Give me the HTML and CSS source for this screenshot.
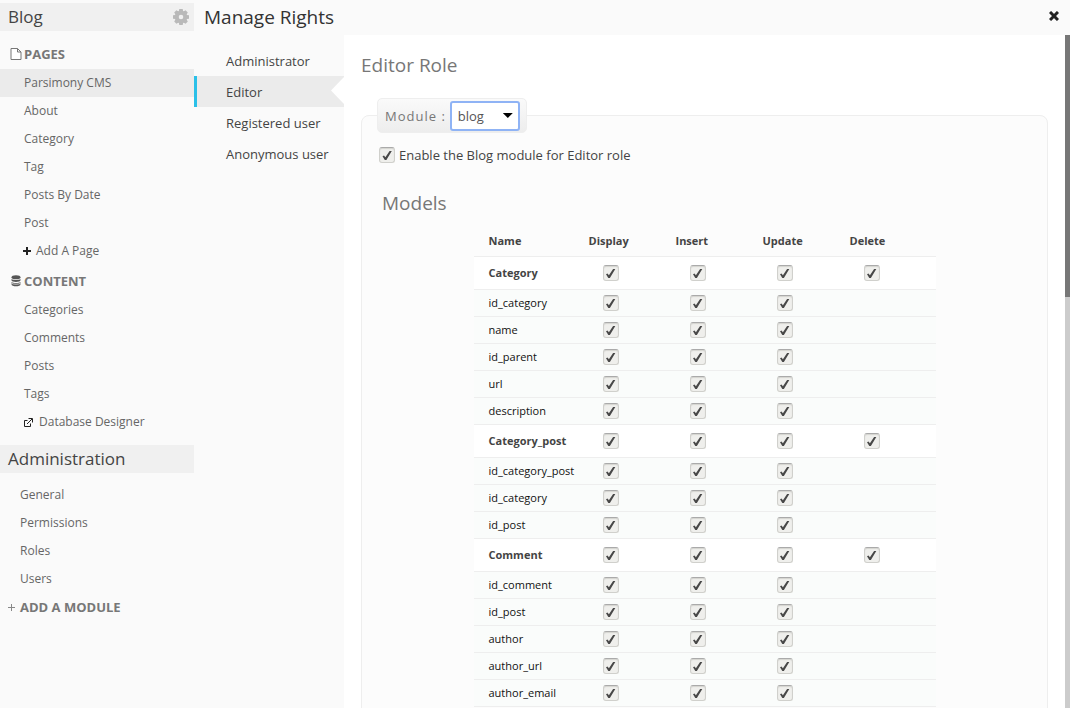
FILE: index.html
```html
<!DOCTYPE html>
<html lang="en">
<head>
<meta charset="utf-8">
<title>Manage Rights</title>
<link rel="stylesheet" href="styles.css">
</head>
<body>
<div class="app">
  <aside class="sidebar">
    <div class="side-title"><h2>Blog</h2>
      <button class="icon-button" type="button" aria-label="Settings"><svg width="16" height="16" viewBox="0 0 16 16"><path fill="#b9b9b9" fill-rule="evenodd" d="M6.300 0h3.400l.4 2 .7.300L12.600 1.200 14.800 3.400 13.700 5.200l.3.700 2 .4v3.400l-2 .4-.3.700 1.100 1.800-2.200 2.200-1.800-1.100-.7.300-.4 2H6.300l-.4-2-.7-.300-1.800 1.100-2.200-2.200 1.100-1.800-.3-.7-2-.4V6.300l2-.4.3-.7L1.200 3.400 3.400 1.200l1.800 1.100.7-.300zM8 5.700a2.300 2.300 0 1 0 0 4.600 2.300 2.300 0 0 0 0-4.600z"/></svg></button>
    </div>
    <nav>
      <h3 class="group"><svg width="12" height="12" viewBox="0 0 12 12"><path fill="#fff" stroke="#777" d="M1 .5h6.500l3.500 3.500v7.500H1zM7.500.5V4H11"/></svg>PAGES</h3>
      <ul class="links">
        <li class="current"><a href="#">Parsimony CMS</a></li>
        <li><a href="#">About</a></li>
        <li><a href="#">Category</a></li>
        <li><a href="#">Tag</a></li>
        <li><a href="#">Posts By Date</a></li>
        <li><a href="#">Post</a></li>
        <li><a class="with-icon" href="#"><svg width="8" height="8" viewBox="0 0 8 8"><path fill="#222" d="M3 0h2v3h3v2H5v3H3V5H0V3h3z"/></svg>Add A Page</a></li>
      </ul>
      <h3 class="group"><svg width="12" height="12" viewBox="0 0 12 12"><g fill="#555"><ellipse cx="6" cy="2.300" rx="4.500" ry="2"/><path d="M1.500 4c1.500 1.300 7.500 1.300 9 0v1.300C10.500 7.600 1.500 7.600 1.500 5.300zM1.500 6.900c1.500 1.300 7.500 1.300 9 0v2.300c0 2.700-9 2.700-9 0z"/></g><path stroke="#fafafa" fill="none" stroke-width=".7" d="M1.500 8.300c2 1.200 7 1.200 9 0"/></svg>CONTENT</h3>
      <ul class="links">
        <li><a href="#">Categories</a></li>
        <li><a href="#">Comments</a></li>
        <li><a href="#">Posts</a></li>
        <li><a href="#">Tags</a></li>
        <li><a class="with-icon wide" href="#"><svg width="9" height="9" viewBox="0 0 9 9"><path fill="none" stroke="#222" d="M3.500 2.500h-3v6h6v-3M3 6l5-5M4.500.5h4v4"/></svg>Database Designer</a></li>
      </ul>
    </nav>
    <div class="side-title admin-title"><h2>Administration</h2></div>
    <nav>
      <ul class="links admin">
        <li><a href="#">General</a></li>
        <li><a href="#">Permissions</a></li>
        <li><a href="#">Roles</a></li>
        <li><a href="#">Users</a></li>
      </ul>
      <a class="group add-module" href="#"><svg width="7" height="7" viewBox="0 0 7 7"><path stroke="#888" d="M3.500 0v7M0 3.500h7"/></svg>ADD A MODULE</a>
    </nav>
  </aside>
  <div class="window">
    <header class="window-head"><h1>Manage Rights</h1>
      <button class="icon-button" type="button" aria-label="Close"><svg width="10" height="10" viewBox="0 0 10 10"><path stroke="#222" stroke-width="3" d="M1 1l8 8M9 1L1 9"/></svg></button>
    </header>
    <div class="window-body">
      <ul class="roles">
        <li><a href="#">Administrator</a></li>
        <li class="active"><a href="#">Editor</a></li>
        <li><a href="#">Registered user</a></li>
        <li><a href="#">Anonymous user</a></li>
      </ul>
      <main class="panel">
        <h2>Editor Role</h2>
        <fieldset>
          <legend><label for="module">Module :</label><span class="select"><select id="module"><option>blog</option></select></span></legend>
          <label class="enable"><input type="checkbox" checked>Enable the Blog module for Editor role</label>
          <h2>Models</h2>
          <table>
            <colgroup><col class="c-name"><col class="c-right"><col class="c-right"><col class="c-right"><col></colgroup>
            <thead><tr><th scope="col">Name</th><th scope="col">Display</th><th scope="col">Insert</th><th scope="col">Update</th><th scope="col">Delete</th></tr></thead>
            <tbody>
              <tr class="model"><th scope="row">Category</th><td><input type="checkbox" aria-label="Display" checked></td><td><input type="checkbox" aria-label="Insert" checked></td><td><input type="checkbox" aria-label="Update" checked></td><td><input type="checkbox" aria-label="Delete" checked></td></tr>
              <tr><th scope="row">id_category</th><td><input type="checkbox" aria-label="Display" checked></td><td><input type="checkbox" aria-label="Insert" checked></td><td><input type="checkbox" aria-label="Update" checked></td><td></td></tr>
              <tr><th scope="row">name</th><td><input type="checkbox" aria-label="Display" checked></td><td><input type="checkbox" aria-label="Insert" checked></td><td><input type="checkbox" aria-label="Update" checked></td><td></td></tr>
              <tr><th scope="row">id_parent</th><td><input type="checkbox" aria-label="Display" checked></td><td><input type="checkbox" aria-label="Insert" checked></td><td><input type="checkbox" aria-label="Update" checked></td><td></td></tr>
              <tr><th scope="row">url</th><td><input type="checkbox" aria-label="Display" checked></td><td><input type="checkbox" aria-label="Insert" checked></td><td><input type="checkbox" aria-label="Update" checked></td><td></td></tr>
              <tr><th scope="row">description</th><td><input type="checkbox" aria-label="Display" checked></td><td><input type="checkbox" aria-label="Insert" checked></td><td><input type="checkbox" aria-label="Update" checked></td><td></td></tr>
            </tbody>
            <tbody>
              <tr class="model"><th scope="row">Category_post</th><td><input type="checkbox" aria-label="Display" checked></td><td><input type="checkbox" aria-label="Insert" checked></td><td><input type="checkbox" aria-label="Update" checked></td><td><input type="checkbox" aria-label="Delete" checked></td></tr>
              <tr><th scope="row">id_category_post</th><td><input type="checkbox" aria-label="Display" checked></td><td><input type="checkbox" aria-label="Insert" checked></td><td><input type="checkbox" aria-label="Update" checked></td><td></td></tr>
              <tr><th scope="row">id_category</th><td><input type="checkbox" aria-label="Display" checked></td><td><input type="checkbox" aria-label="Insert" checked></td><td><input type="checkbox" aria-label="Update" checked></td><td></td></tr>
              <tr><th scope="row">id_post</th><td><input type="checkbox" aria-label="Display" checked></td><td><input type="checkbox" aria-label="Insert" checked></td><td><input type="checkbox" aria-label="Update" checked></td><td></td></tr>
            </tbody>
            <tbody>
              <tr class="model"><th scope="row">Comment</th><td><input type="checkbox" aria-label="Display" checked></td><td><input type="checkbox" aria-label="Insert" checked></td><td><input type="checkbox" aria-label="Update" checked></td><td><input type="checkbox" aria-label="Delete" checked></td></tr>
              <tr><th scope="row">id_comment</th><td><input type="checkbox" aria-label="Display" checked></td><td><input type="checkbox" aria-label="Insert" checked></td><td><input type="checkbox" aria-label="Update" checked></td><td></td></tr>
              <tr><th scope="row">id_post</th><td><input type="checkbox" aria-label="Display" checked></td><td><input type="checkbox" aria-label="Insert" checked></td><td><input type="checkbox" aria-label="Update" checked></td><td></td></tr>
              <tr><th scope="row">author</th><td><input type="checkbox" aria-label="Display" checked></td><td><input type="checkbox" aria-label="Insert" checked></td><td><input type="checkbox" aria-label="Update" checked></td><td></td></tr>
              <tr><th scope="row">author_url</th><td><input type="checkbox" aria-label="Display" checked></td><td><input type="checkbox" aria-label="Insert" checked></td><td><input type="checkbox" aria-label="Update" checked></td><td></td></tr>
              <tr><th scope="row">author_email</th><td><input type="checkbox" aria-label="Display" checked></td><td><input type="checkbox" aria-label="Insert" checked></td><td><input type="checkbox" aria-label="Update" checked></td><td></td></tr>
            </tbody>
          </table>
        </fieldset>
      </main>
      <div class="scroll-track"><div class="scroll-thumb"></div></div>
    </div>
  </div>
</div>
</body>
</html>
```

FILE: styles.css
```css
* { box-sizing: border-box; }
body { margin: 0; background: #fafafa; color: #444; font: 12px/28px "Open Sans", "Noto Sans", sans-serif; }
h1, h2, h3, ul { margin: 0; padding: 0; }
h1, h2 { font-size: 19px; font-weight: 400; }
ul { list-style: none; }
a { color: inherit; text-decoration: none; }
svg { display: block; flex: none; }

.app { display: flex; height: 100vh; overflow: hidden; }
.icon-button { padding: 0; border: 0; background: none; cursor: pointer; }

/* Left navigation */
.sidebar { flex: none; width: 194px; padding-top: 3px; color: #666; }
.side-title { display: flex; align-items: center; justify-content: space-between; height: 28px; padding: 0 5px 0 8px; background: #f0f0f0; color: #444; }
.side-title h2 { font-size: 17px; }
.admin-title { margin: 9px 0 8px; }
.group { display: flex; align-items: center; gap: 2px; height: 31px; padding-left: 10px; color: #777; font-size: 13px; font-weight: 700; }
.side-title + nav > h3:first-child { height: 38px; padding-top: 8px; }
.links li { height: 28px; padding-left: 24px; }
.links.admin li { padding-left: 20px; }
.links .current { background: #ebebeb; }
.with-icon { display: inline-flex; align-items: center; gap: 5px; height: 28px; margin-left: -1px; }
.with-icon.wide { gap: 6px; margin-left: 0; }
.add-module { gap: 5px; height: 28px; padding-left: 8px; }

/* Window */
.window { display: flex; flex: 1; flex-direction: column; min-width: 0; }
.window-head { display: flex; align-items: center; justify-content: space-between; flex: none; height: 35px; padding: 0 11px 4px 10px; color: #333; }
.window-head h1 { padding-top: 2px; }
.window-body { display: flex; flex: 1; min-height: 0; }
.roles { flex: none; width: 150px; padding-top: 10px; font-size: 13px; line-height: 32px; }
.roles li { height: 31px; padding-left: 32px; }
.roles .active { display: flex; justify-content: space-between; padding-left: 29px; border-left: 3px solid #2bc0e8; background: #ebebeb; }
.roles .active::after { content: ""; width: 13px; height: 27px; margin-top: 1px; background: #fff; clip-path: polygon(100% 0, 100% 100%, 0 50%); }

.panel { flex: 1; min-width: 0; padding: 16px 17px 0; overflow: hidden; background: #fff; color: #444; }
.panel h2 { color: #777; }
fieldset { min-width: 0; margin: 19px 0 0; padding: 0 17px 30px; border: 1px solid #eee; border-radius: 8px; background: #fcfcfc; }
legend { display: flex; align-items: center; gap: 4px; height: 35px; margin-left: -2px; padding: 0 6px 0 7px; border: 1px solid #eee; border-radius: 5px; background: linear-gradient(#fafafa, #ededed); color: #777; font-size: 13px; letter-spacing: 1px; }
.select { display: flex; align-items: center; padding-right: 7px; }
.select::after { content: ""; width: 10px; height: 5px; margin-left: -17px; background: #000; clip-path: polygon(0 0, 100% 0, 50% 100%); pointer-events: none; }
select { width: 70px; height: 30px; padding: 0 6px; appearance: none; border: 2px solid #8fb3f5; border-radius: 3px; background: #fff; color: #555; font: 13px "Open Sans", "Noto Sans", sans-serif; }
.enable { display: flex; align-items: center; gap: 4px; margin-top: 8px; font-size: 13px; }
fieldset h2 { margin: 20px 0 8px 3px; }

input[type="checkbox"] { display: grid; place-items: center; flex: none; width: 16px; height: 16px; margin: 0; appearance: none; border: 1px solid #d0d0cc; border-top-color: #aaa; border-radius: 3px; background: #efefec; box-shadow: inset 0 1px 1px #d4d4d0; }
input[type="checkbox"]:checked::before { content: ""; width: 10px; height: 10px; background: #484848; clip-path: polygon(5% 62%, 20% 54%, 34% 72%, 76% 10%, 98% 10%, 44% 100%, 28% 100%); }

table { width: 462px; margin: 0 auto; border-spacing: 0; table-layout: fixed; font-size: 11px; line-height: 16px; }
.c-name { width: 105px; }
.c-right { width: 87px; }
th, td { height: 27px; padding: 0 0 0 24px; border-bottom: 1px solid #eee; text-align: left; }
th:first-child { padding-left: 15px; }
thead th { height: 32px; padding-left: 10px; }
tbody tr { background: #fafcfb; }
tbody th { color: #111; font-weight: 400; white-space: nowrap; }
tbody .model { background: #fff; }
.model th, .model td { height: 33px; }
.model th { color: #444; font-weight: 700; }

.scroll-track { flex: none; width: 5px; background: #ccc; }
.scroll-thumb { height: 39%; background: #777; }
```
